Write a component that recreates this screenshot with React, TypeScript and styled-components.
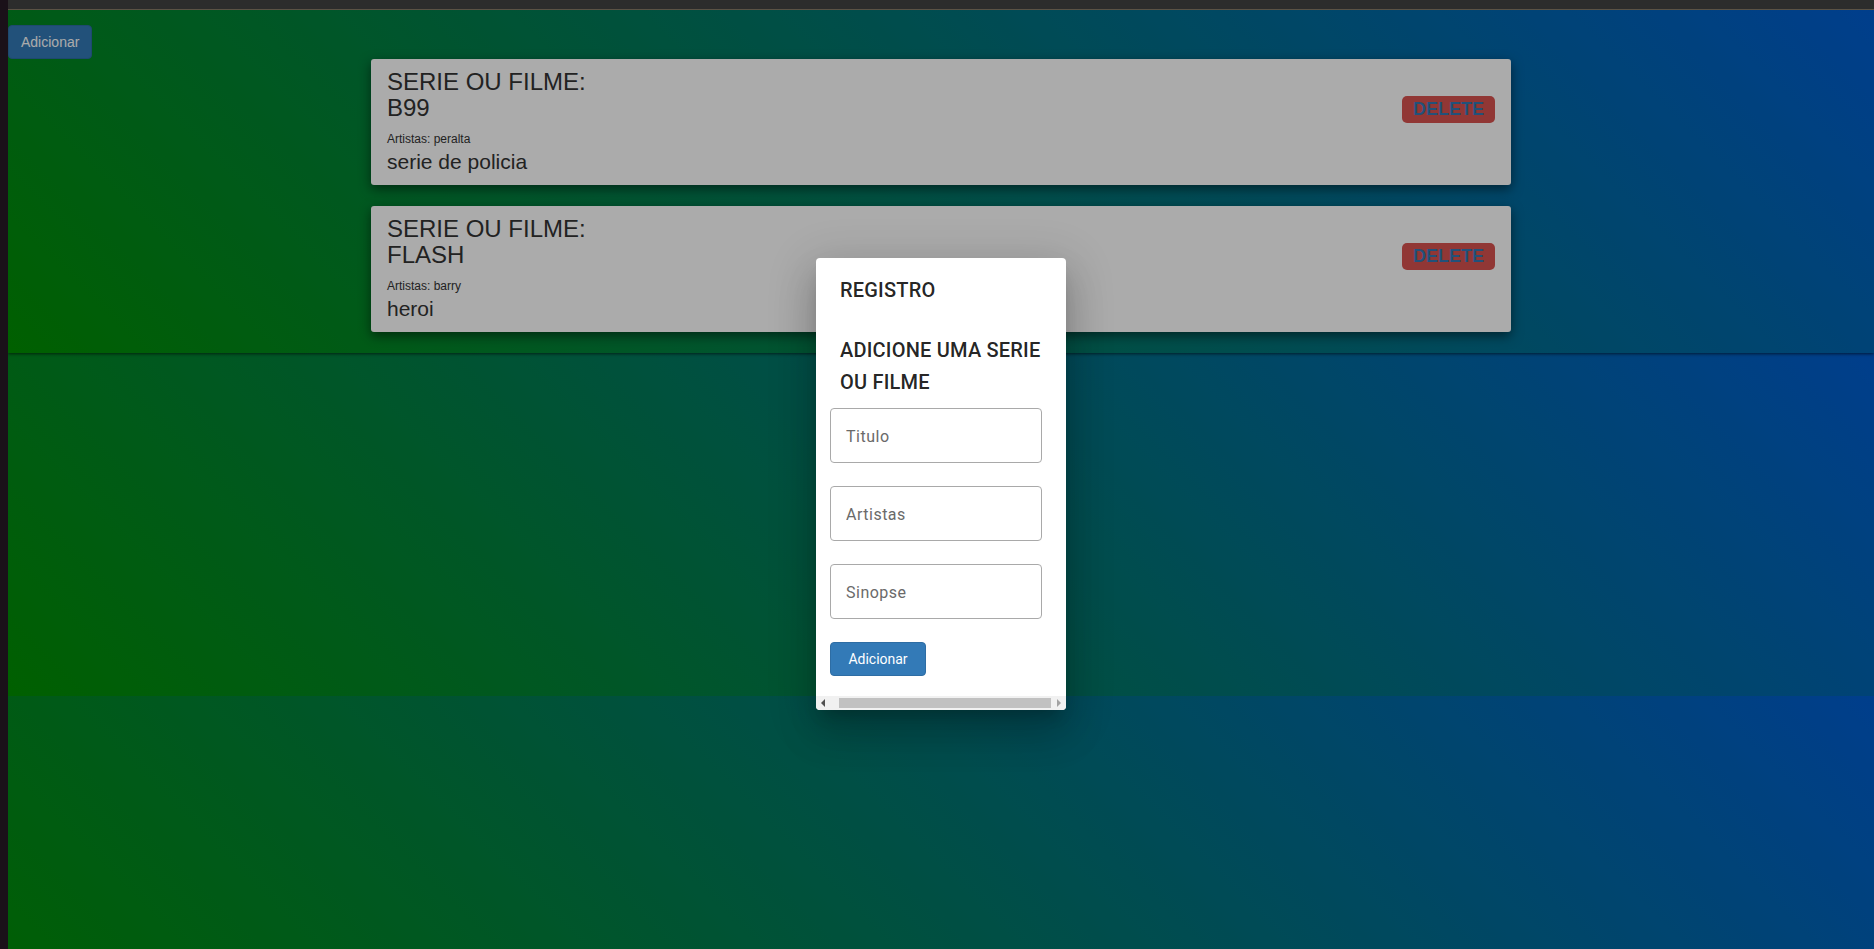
import React from "react";
import styled, { createGlobalStyle } from "styled-components";

const Global = createGlobalStyle`
  html, body { margin: 0; padding: 0; height: 100%; }
  body { background: #1a1119; overflow: hidden; }
  #root { height: 100%; }
  *, *::before, *::after { box-sizing: border-box; }
`;

const Shell = styled.div`
  display: flex;
  width: 1874px;
  height: 949px;
`;

const LeftEdge = styled.div`
  flex: none;
  width: 8px;
  background: #1a1119;
`;

const Frame = styled.div`
  flex: 1;
  min-width: 0;
  display: flex;
  flex-direction: column;
`;

const TopBar = styled.div`
  flex: none;
  height: 10px;
  background: #2c2c2c;
  border-bottom: 1px solid #5b5245;
`;

const Viewport = styled.div`
  position: relative;
  flex: 1;
  overflow: hidden;
  background-image: linear-gradient(45deg, #008f00, #005dd1);
  background-size: 100% 343px;
  background-repeat: repeat-y;
`;

const Page = styled.main`
  height: 343px;
  padding-top: 15px;
  background: linear-gradient(45deg, #008f00, #005dd1);
  box-shadow: 0 1px 3px rgba(0, 0, 0, 0.6);
  font-family: "Liberation Sans", Arial, sans-serif;
  font-size: 14px;
  color: #333;
`;

const PrimaryButton = styled.button`
  display: block;
  font-family: inherit;
  font-size: 14px;
  line-height: 20px;
  padding: 6px 12px;
  color: #fff;
  background: #337ab7;
  border: 1px solid #2e6da4;
  border-radius: 4px;
  cursor: pointer;
`;

const List = styled.section`
  width: 1140px;
  margin: 0 auto;
  display: flex;
  flex-direction: column;
  gap: 21px;
`;

const Card = styled.article`
  height: 126px;
  padding: 10px 16px 9px;
  background: #fff;
  border-radius: 3px;
  box-shadow: 0 4px 12px rgba(0, 0, 0, 0.5);
`;

const CardHead = styled.div`
  display: flex;
  justify-content: space-between;
  align-items: flex-start;
`;

const Title = styled.h3`
  margin: 0 0 9px;
  font-size: 24px;
  line-height: 1.1;
  font-weight: 400;
`;

const DeleteButton = styled.button`
  margin-top: 27px;
  padding: 3px 11px;
  font-family: inherit;
  font-size: 18px;
  line-height: 21px;
  font-weight: 700;
  color: #337ab7;
  background: #d9534f;
  border: 0;
  border-radius: 5px;
`;

const Artists = styled.div`
  font-size: 12px;
  line-height: 16px;
`;

const Lead = styled.p`
  margin: 0;
  font-size: 21px;
  line-height: 29.4px;
`;

const Backdrop = styled.div`
  position: absolute;
  inset: 0;
  padding-top: 9px;
  display: flex;
  justify-content: center;
  align-items: center;
  background: rgba(0, 0, 0, 0.33);
`;

const Dialog = styled.div`
  width: 250px;
  display: flex;
  flex-direction: column;
  overflow: hidden;
  background: #fff;
  border-radius: 4px;
  box-shadow: 0 11px 15px -7px rgba(0, 0, 0, 0.2),
    0 24px 38px 3px rgba(0, 0, 0, 0.14), 0 9px 46px 8px rgba(0, 0, 0, 0.12);
  font-family: Roboto, "Noto Sans", sans-serif;
  color: rgba(0, 0, 0, 0.87);
`;

const Heading = styled.h2<{ $sub?: boolean }>`
  margin: ${(p) => (p.$sub ? "12px 0 10px" : "0")};
  padding: ${(p) => (p.$sub ? "0 18px 0 24px" : "16px 24px")};
  font-size: 20px;
  font-weight: 500;
  line-height: 32px;
  letter-spacing: 0.2px;
`;

const Form = styled.form`
  display: flex;
  flex-direction: column;
  align-items: stretch;
  gap: 23px;
  padding: 0 24px 20px 14px;
`;

const Field = styled.input`
  height: 55px;
  width: 100%;
  padding: 2px 14px 0 15px;
  font-family: Roboto, "Noto Sans", sans-serif;
  font-size: 16px;
  letter-spacing: 0.5px;
  color: rgba(0, 0, 0, 0.87);
  background: #fff;
  border: 1px solid #a9a9a9;
  border-radius: 4px;
  outline: none;
  &::placeholder {
    color: #6a6a6a;
    opacity: 1;
  }
`;

const SubmitButton = styled(PrimaryButton)`
  align-self: flex-start;
  width: 96px;
  padding: 6px 0;
  font-family: Roboto, "Noto Sans", sans-serif;
`;

const Scrollbar = styled.div`
  display: flex;
  height: 14px;
  background: #f1f1f1;
`;

const ArrowCell = styled.div`
  flex: none;
  width: 14px;
  display: flex;
  align-items: center;
  justify-content: center;
`;

const Track = styled.div`
  flex: 1;
  display: flex;
  padding: 2px 1px 2px 9px;
`;

const Thumb = styled.div`
  flex: 1;
  background: #c1c1c1;
`;

const Arrow = ({ dir, color }: { dir: "left" | "right"; color: string }) => (
  <svg width="6" height="8" viewBox="0 0 6 8">
    <polygon
      points={dir === "left" ? "5,0 5,8 1,4" : "1,0 1,8 5,4"}
      fill={color}
    />
  </svg>
);

const items = [
  { title: "B99", artists: "peralta", synopsis: "serie de policia" },
  { title: "FLASH", artists: "barry", synopsis: "heroi" },
];

export default function App() {
  return (
    <>
      <Global />
      <Shell>
        <LeftEdge />
        <Frame>
          <TopBar />
          <Viewport>
            <Page>
              <PrimaryButton>Adicionar</PrimaryButton>
              <List>
                {items.map((it) => (
                  <Card key={it.title}>
                    <CardHead>
                      <Title>
                        SERIE OU FILME:
                        <br />
                        {it.title}
                      </Title>
                      <DeleteButton>DELETE</DeleteButton>
                    </CardHead>
                    <Artists>Artistas: {it.artists}</Artists>
                    <Lead>{it.synopsis}</Lead>
                  </Card>
                ))}
              </List>
            </Page>
            <Backdrop>
              <Dialog>
                <Heading>REGISTRO</Heading>
                <Heading $sub>ADICIONE UMA SERIE OU FILME</Heading>
                <Form onSubmit={(e) => e.preventDefault()}>
                  <Field placeholder="Titulo" />
                  <Field placeholder="Artistas" />
                  <Field placeholder="Sinopse" />
                  <SubmitButton type="submit">Adicionar</SubmitButton>
                </Form>
                <Scrollbar>
                  <ArrowCell>
                    <Arrow dir="left" color="#505050" />
                  </ArrowCell>
                  <Track>
                    <Thumb />
                  </Track>
                  <ArrowCell>
                    <Arrow dir="right" color="#a3a3a3" />
                  </ArrowCell>
                </Scrollbar>
              </Dialog>
            </Backdrop>
          </Viewport>
        </Frame>
      </Shell>
    </>
  );
}
